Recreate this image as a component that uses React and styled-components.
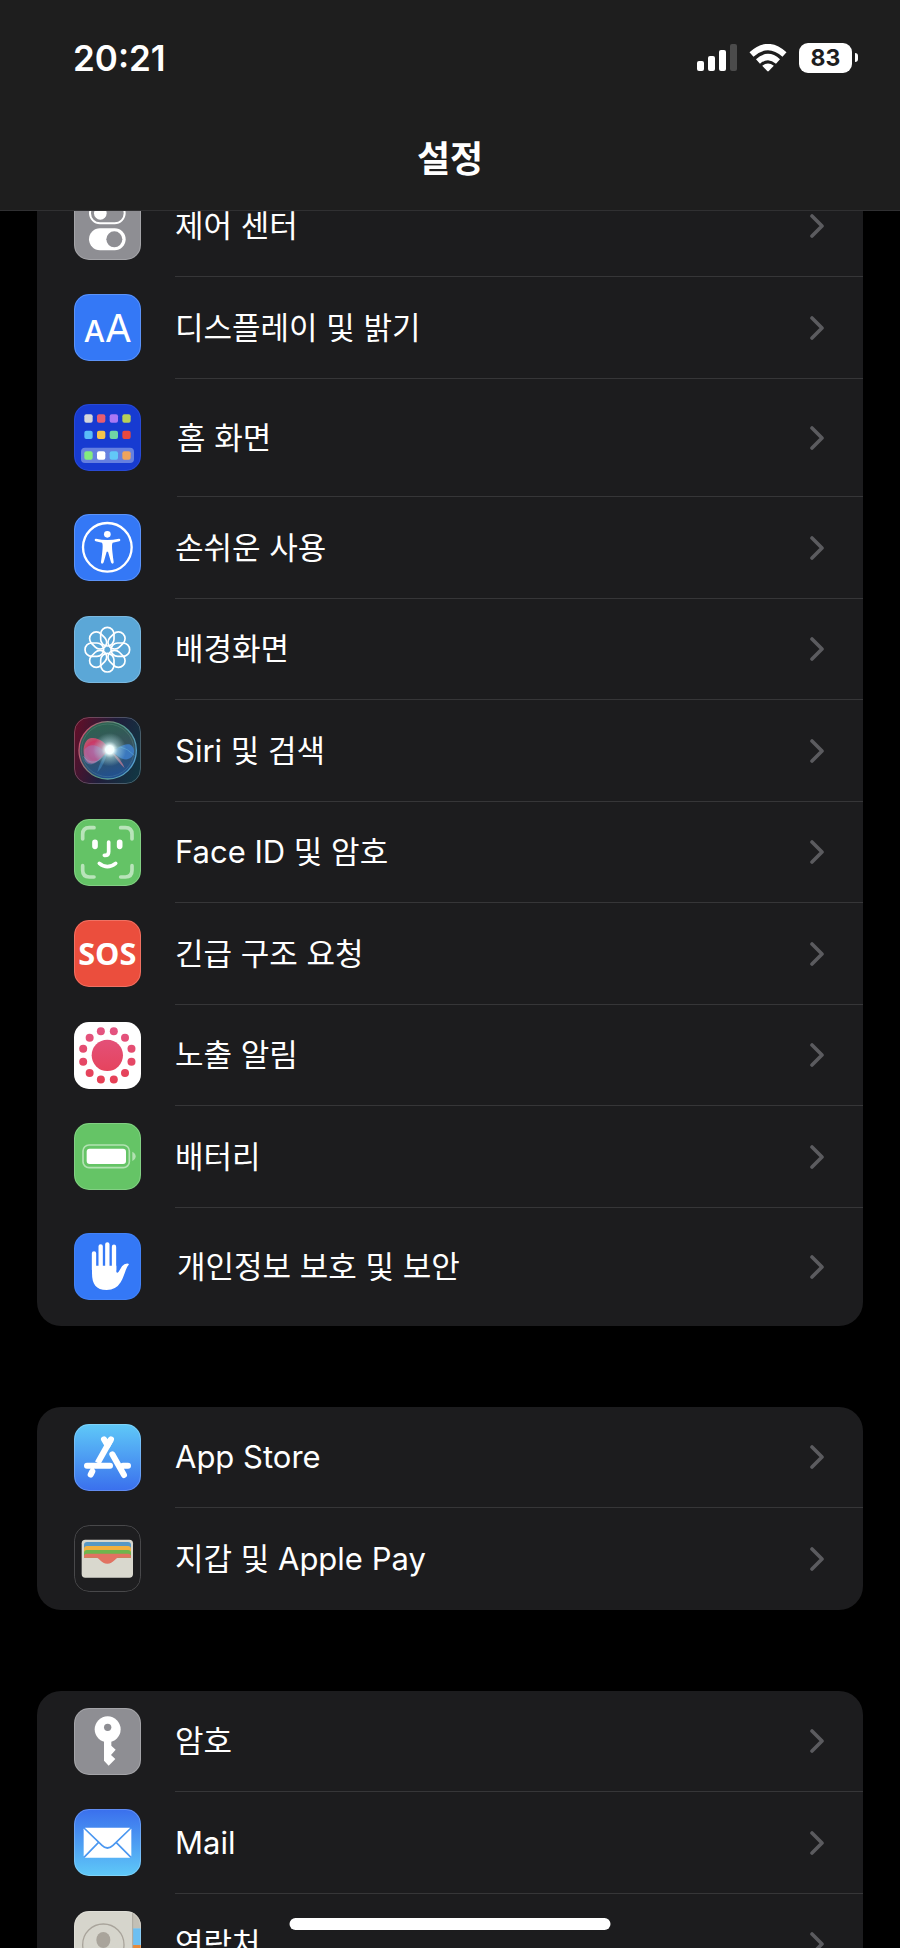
import React from "react";
import styled, { createGlobalStyle } from "styled-components";

const GlobalStyle = createGlobalStyle`
  * {
    box-sizing: border-box;
  }

  body {
    margin: 0;
    background: #000;
    color: #fff;
    font-family: Inter, "Noto Sans CJK KR", sans-serif;
  }
`;

const Screen = styled.div`
  position: relative;
  display: flex;
  flex-direction: column;
  height: 100vh;
  overflow: hidden;
  background: #000;
`;

const Header = styled.header`
  flex: none;
  background: #1e1e1e;
`;

const StatusBar = styled.div`
  display: flex;
  align-items: center;
  justify-content: space-between;
  height: 115px;
  padding: 0 42px 0 73px;
`;

const Time = styled.time`
  font-size: 35px;
  font-weight: 600;
  line-height: 40px;
`;

const StatusIcons = styled.div`
  display: flex;
  align-items: center;
  gap: 12px;
`;

const Battery = styled.div`
  display: flex;
  align-items: center;
  gap: 3px;
`;

const BatteryLevel = styled.span`
  width: 53px;
  border-radius: 9px;
  background: #fff;
  color: #1e1e1e;
  font-size: 23px;
  font-weight: 700;
  line-height: 30px;
  text-align: center;
`;

const BatteryTip = styled.span`
  width: 3px;
  height: 9px;
  border-radius: 0 5px 5px 0;
  background: #fff;
`;

const Title = styled.h1`
  margin: 0;
  padding: 19px 0 26px;
  border-bottom: 1px solid #303032;
  font-size: 36px;
  font-weight: 700;
  line-height: 50px;
  text-align: center;
`;

const Content = styled.main`
  flex: 1;
  min-height: 0;
  overflow: hidden;
`;

const Groups = styled.nav`
  display: flex;
  flex-direction: column;
  gap: 81px;
  margin-top: -35px;
  padding: 0 37px;
`;

const Group = styled.ul`
  margin: 0;
  padding: 0;
  border-radius: 24px;
  background: #1c1c1e;
  list-style: none;
`;

const Item = styled.li`
  height: ${({ $tall }) => ($tall ? "118px" : "101px")};

  &:nth-child(even) {
    height: 102px;
  }
`;

const Row = styled.a`
  display: flex;
  align-items: center;
  gap: ${({ $tall }) => ($tall ? "36px" : "34px")};
  height: 100%;
  padding-left: 37px;
  color: inherit;
  text-decoration: none;
`;

const RowBody = styled.span`
  display: flex;
  flex: 1;
  align-items: center;
  justify-content: space-between;
  height: 100%;
  padding-right: 39px;
  border-bottom: 1px solid #363638;

  ${Item}:last-child & {
    border-bottom-color: transparent;
  }
`;

const Label = styled.span`
  font-size: 31px;
  line-height: 40px;
`;

const IconTile = styled.svg`
  flex: none;
  width: 67px;
  height: 67px;
  margin-bottom: 1px;
  border-radius: 15px;
`;

const HomeIndicator = styled.div`
  position: absolute;
  bottom: 18px;
  left: 50%;
  width: 321px;
  height: 12px;
  border-radius: 6px;
  background: #fff;
  transform: translateX(-50%);
`;

const Tile = ({ fill, edge = "rgba(255, 255, 255, 0.2)", children }) => (
  <IconTile viewBox="0 0 201 201" aria-hidden="true">
    <rect width="201" height="201" fill={fill} />
    {children}
    <rect
      x="1.5"
      y="1.5"
      width="198"
      height="198"
      rx="44"
      fill="none"
      stroke={edge}
      strokeWidth="3"
    />
  </IconTile>
);

const ControlCenterIcon = () => (
  <Tile fill="#8e8e93">
    <rect x="48" y="31" width="104" height="60" rx="30" fill="none" stroke="#fff" strokeWidth="6" />
    <circle cx="79" cy="61" r="19" fill="#fff" />
    <rect x="45" y="106" width="110" height="66" rx="33" fill="#fff" />
    <circle cx="121" cy="139" r="24" fill="#8e8e93" />
  </Tile>
);

const DisplayIcon = () => (
  <Tile fill="#3478f6">
    <g fill="#fff" fontFamily="Inter, sans-serif" textAnchor="middle">
      <text x="61" y="143" fontSize="90" fontWeight="500">
        A
      </text>
      <text x="133" y="143" fontSize="116" fontWeight="400">
        A
      </text>
    </g>
  </Tile>
);

const APP_COLORS = [
  ["#d5d6da", "#e85d70", "#a878f5", "#b6d159"],
  ["#5abcf8", "#f5c34c", "#70d5a5", "#e8493f"],
  ["#83ec7e", "#ffffff", "#62c8f8", "#efa45c"],
];

const HomeScreenIcon = () => (
  <Tile fill="#173bd1" edge="rgba(255, 255, 255, 0.08)">
    <rect x="21" y="131" width="159" height="46" rx="12" fill="#6580e0" />
    {APP_COLORS.map((row, y) =>
      row.map((color, x) => (
        <rect
          key={color}
          x={31 + x * 38}
          y={[31, 80, 142][y]}
          width="25"
          height="25"
          rx="6"
          fill={color}
        />
      ))
    )}
  </Tile>
);

const AccessibilityIcon = () => (
  <Tile fill="#3478f6">
    <circle cx="100" cy="100" r="73" fill="none" stroke="#fff" strokeWidth="7" />
    <circle cx="100" cy="61" r="10" fill="#fff" />
    <path
      d="M66 74 Q83 78 100 78 Q117 78 135 74 Q139 74 139 78 Q139 81 136 82 L116 86 Q114 88 114 96 Q114 110 119 143 Q120 148 116 149 Q112 149 111 145 L102 113 H98 L89 145 Q88 149 84 149 Q80 148 81 143 Q86 110 86 96 Q86 88 84 86 L65 82 Q62 81 62 78 Q62 74 66 74 Z"
      fill="#fff"
    />
  </Tile>
);

const WallpaperIcon = () => (
  <Tile fill="#5ba7d7">
    <g fill="none" stroke="#fff" strokeWidth="5">
      {[0, 45, 90, 135, 180, 225, 270, 315].map((angle) => (
        <rect
          key={angle}
          x="-20"
          y="-67"
          width="40"
          height="56"
          rx="20"
          transform={`translate(100 101) rotate(${angle})`}
        />
      ))}
    </g>
  </Tile>
);

const SiriIcon = () => (
  <Tile fill="url(#siriBack)" edge="rgba(255, 255, 255, 0.22)">
    <defs>
      <linearGradient id="siriBack" x1="0" y1="0.3" x2="1" y2="0.6">
        <stop offset="0" stopColor="#5e1029" />
        <stop offset="0.5" stopColor="#201d3a" />
        <stop offset="1" stopColor="#123543" />
      </linearGradient>
      <linearGradient id="siriOrb" x1="0.35" y1="0" x2="0.6" y2="1">
        <stop offset="0" stopColor="#2c6350" />
        <stop offset="0.45" stopColor="#37545c" />
        <stop offset="1" stopColor="#1f5094" />
      </linearGradient>
      <linearGradient id="siriRim" x1="0" y1="0.3" x2="1" y2="0.7">
        <stop offset="0" stopColor="#c8506e" />
        <stop offset="0.5" stopColor="#5a9a80" />
        <stop offset="1" stopColor="#559fd0" />
      </linearGradient>
      <radialGradient id="siriPink">
        <stop offset="0" stopColor="#c85a8c" />
        <stop offset="0.75" stopColor="#c93a66" />
        <stop offset="1" stopColor="#dc5272" stopOpacity="0.8" />
      </radialGradient>
      <radialGradient id="siriGlow">
        <stop offset="0" stopColor="#fff" />
        <stop offset="0.25" stopColor="#f0ffff" />
        <stop offset="0.5" stopColor="#b4dcdf" stopOpacity="0.55" />
        <stop offset="1" stopColor="#9ed8d8" stopOpacity="0" />
      </radialGradient>
    </defs>
    <circle cx="101" cy="100" r="86" fill="url(#siriOrb)" stroke="url(#siriRim)" strokeWidth="4" />
    <circle cx="101" cy="100" r="79" fill="none" stroke="#9dd5bd" strokeWidth="2" opacity="0.25" />
    <path
      d="M106 96 C94 76 70 58 48 64 C24 72 22 124 44 137 C68 148 86 114 106 100 Z"
      fill="url(#siriPink)"
    />
    <path
      d="M31 98 C47 76 74 84 92 104 C76 142 42 154 31 130 Z"
      fill="#8a90d8"
      opacity="0.4"
    />
    <path
      d="M104 98 C126 104 142 78 166 82 C188 92 183 122 160 127 C138 129 124 108 104 98 Z"
      fill="#3f82d2"
      opacity="0.8"
    />
    <path d="M112 104 Q140 122 152 154 Q131 134 112 104 Z" fill="#b97a92" opacity="0.8" />
    <path d="M100 104 Q92 144 70 166 Q78 130 100 104 Z" fill="#4a93cc" opacity="0.5" />
    <path
      d="M28 118 Q60 160 102 101 Q137 72 181 115"
      fill="none"
      stroke="#78d3e8"
      strokeWidth="2"
      opacity="0.5"
    />
    <circle cx="107" cy="98" r="50" fill="url(#siriGlow)" />
  </Tile>
);

const FaceIdIcon = () => (
  <Tile fill="#65c466">
    <g fill="none" stroke="#fff" strokeLinecap="round">
      <g strokeWidth="11" opacity="0.55">
        <path d="M26 60 V46 Q26 26 46 26 H60" />
        <path d="M140 26 H154 Q174 26 174 46 V60" />
        <path d="M174 140 V154 Q174 174 154 174 H140" />
        <path d="M60 174 H46 Q26 174 26 154 V140" />
      </g>
      <path d="M63 70 V82 M137 70 V82" strokeWidth="17" />
      <path d="M104 69 V98 Q104 109 93 109 H91" strokeWidth="11" />
      <path d="M76 133 Q100 153 125 133" strokeWidth="11" />
    </g>
  </Tile>
);

const SosIcon = () => (
  <Tile fill="#eb4e3d">
    <text
      x="100"
      y="134"
      fill="#fff"
      fontFamily='"Open Sans", sans-serif'
      fontSize="92"
      fontWeight="700"
      textAnchor="middle"
    >
      SOS
    </text>
  </Tile>
);

const ExposureIcon = () => (
  <Tile fill="#fff">
    <defs>
      <linearGradient id="exposure" gradientUnits="userSpaceOnUse" x1="0" y1="15" x2="0" y2="185">
        <stop offset="0" stopColor="#e35583" />
        <stop offset="1" stopColor="#e63f53" />
      </linearGradient>
    </defs>
    <g fill="url(#exposure)">
      <circle cx="100" cy="100" r="47" />
      {Array.from({ length: 12 }, (_, i) => {
        const angle = ((15 + i * 30) * Math.PI) / 180;
        return (
          <circle
            key={i}
            cx={100 + 75 * Math.cos(angle)}
            cy={100 + 75 * Math.sin(angle)}
            r="12"
          />
        );
      })}
    </g>
  </Tile>
);

const BatteryIcon = () => (
  <Tile fill="#65c466">
    <rect x="27" y="66" width="139" height="68" rx="18" fill="none" stroke="#b2e2b2" strokeWidth="5" />
    <rect x="38" y="77" width="118" height="46" rx="9" fill="#fff" />
    <path d="M175 86 Q185 91 185 100 Q185 109 175 114 Z" fill="#b2e2b2" />
  </Tile>
);

const PrivacyIcon = () => (
  <Tile fill="#3478f6" edge="rgba(255, 255, 255, 0.08)">
    <path
      d="M60 61 V110 M80 40 V110 M100 34 V110 M120 41 V110"
      stroke="#fff"
      strokeWidth="13"
      strokeLinecap="round"
    />
    <path
      d="M54 98 H127 V117 Q130 122 134 116 L144 100 Q152 90 163 92 Q166 93 163 97 C154 108 151 130 140 148 Q126 171 98 171 C66 171 54 154 54 120 Z"
      fill="#fff"
    />
  </Tile>
);

const AppStoreIcon = () => (
  <Tile fill="url(#appStore)">
    <defs>
      <linearGradient id="appStore" x1="0" y1="0" x2="0" y2="1">
        <stop offset="0" stopColor="#5fc9f8" />
        <stop offset="1" stopColor="#3a6fed" />
      </linearGradient>
    </defs>
    <g fill="none" stroke="#fff" strokeWidth="18" strokeLinecap="round">
      <path d="M111 46 L71 117" strokeLinecap="butt" />
      <path d="M111 46 L100 65 M90 46 L97 58 M39 125 H108 M147 125 H162 M55 142 L50 152 M115 91 L150 153" />
    </g>
  </Tile>
);

const WalletIcon = () => (
  <Tile fill="#1e1e20" edge="#48484a">
    <rect x="23" y="44" width="154" height="114" rx="11" fill="#d9d8ce" />
    <path d="M30 60 Q30 51 39 51 H162 Q171 51 171 60 V98 H30 Z" fill="#5798c5" />
    <path d="M30 72 Q30 63 39 63 H162 Q171 63 171 72 V98 H30 Z" fill="#f2b13f" />
    <path d="M30 84 Q30 75 39 75 H162 Q171 75 171 84 V98 H30 Z" fill="#6fb54d" />
    <path
      d="M30 95 Q30 86 39 86 H162 Q171 86 171 95 V98 H133 C123 98 119 116 100 116 C81 116 77 98 67 98 H30 Z"
      fill="#e17262"
    />
  </Tile>
);

const KeyIcon = () => (
  <Tile fill="#8e8e93">
    <circle cx="101" cy="64" r="39" fill="#fff" />
    <circle cx="101" cy="58" r="11" fill="#8e8e93" />
    <path d="M90 96 V158 L104 173 L124 153 L111 141 L125 125 L112 113 V96 Z" fill="#fff" />
  </Tile>
);

const MailIcon = () => (
  <Tile fill="url(#mail)">
    <defs>
      <linearGradient id="mail" x1="0" y1="0" x2="0" y2="1">
        <stop offset="0" stopColor="#3a6fed" />
        <stop offset="1" stopColor="#5fc9f8" />
      </linearGradient>
    </defs>
    <rect x="29" y="56" width="143" height="90" rx="5" fill="#fff" />
    <path
      d="M30 57 L84 109 Q100 125 117 109 L171 57 M30 145 L73 101 M171 145 L127 101"
      fill="none"
      stroke="#4b97f0"
      strokeWidth="5"
    />
  </Tile>
);

const ContactsIcon = () => (
  <Tile fill="#d6d5cc">
    <rect x="177" width="24" height="52" fill="#c3c0b6" />
    <rect x="177" y="52" width="24" height="50" fill="#6cbff2" />
    <rect x="177" y="102" width="24" height="50" fill="#e58a3c" />
    <rect x="177" y="152" width="24" height="49" fill="#c3c0b6" />
    <path d="M176 0 V201" stroke="#aaa79d" strokeWidth="3" />
    <circle cx="88" cy="101" r="62" fill="none" stroke="#a9a49b" strokeWidth="4" />
    <ellipse cx="88" cy="87" rx="21" ry="24" fill="#a9a49b" />
    <path d="M42 139 Q60 117 88 117 Q116 117 134 139 Q88 186 42 139 Z" fill="#a9a49b" />
  </Tile>
);

const Chevron = () => (
  <svg width="14" height="24" viewBox="0 0 14 24" fill="none" aria-hidden="true">
    <path
      d="M2 2 L12 12 L2 22"
      stroke="#5b5b5f"
      strokeWidth="3.6"
      strokeLinecap="round"
      strokeLinejoin="round"
    />
  </svg>
);

const SignalIcon = () => (
  <svg width="40" height="27" viewBox="0 0 40 27" aria-label="신호 강도">
    <rect y="17" width="7" height="10" rx="2" fill="#fff" />
    <rect x="11" y="12" width="7" height="15" rx="2" fill="#fff" />
    <rect x="22" y="6" width="7" height="21" rx="2" fill="#fff" />
    <rect x="33" width="7" height="27" rx="2" fill="#4b4b4b" />
  </svg>
);

const WifiIcon = () => (
  <svg width="38" height="28" viewBox="0 0 38 28" fill="none" aria-label="Wi-Fi">
    <path d="M2.5 10.5 Q19 -4.5 35.5 10.5" stroke="#fff" strokeWidth="6" />
    <path d="M9 17.5 Q19 8.5 29 17.5" stroke="#fff" strokeWidth="6" />
    <path d="M13.2 21.8 Q19 17.4 24.8 21.8 L19.8 27 Q19 27.8 18.2 27 Z" fill="#fff" />
  </svg>
);

const groups = [
  [
    { label: "제어 센터", icon: ControlCenterIcon },
    { label: "디스플레이 및 밝기", icon: DisplayIcon },
    { label: "홈 화면", icon: HomeScreenIcon, tall: true },
    { label: "손쉬운 사용", icon: AccessibilityIcon },
    { label: "배경화면", icon: WallpaperIcon },
    { label: "Siri 및 검색", icon: SiriIcon },
    { label: "Face ID 및 암호", icon: FaceIdIcon },
    { label: "긴급 구조 요청", icon: SosIcon },
    { label: "노출 알림", icon: ExposureIcon },
    { label: "배터리", icon: BatteryIcon },
    { label: "개인정보 보호 및 보안", icon: PrivacyIcon, tall: true },
  ],
  [
    { label: "App Store", icon: AppStoreIcon },
    { label: "지갑 및 Apple Pay", icon: WalletIcon },
  ],
  [
    { label: "암호", icon: KeyIcon },
    { label: "Mail", icon: MailIcon },
    { label: "연락처", icon: ContactsIcon },
  ],
];

const App = () => {
  return (
    <>
      <GlobalStyle />
      <Screen lang="ko">
        <Header>
          <StatusBar>
            <Time>20:21</Time>
            <StatusIcons>
              <SignalIcon />
              <WifiIcon />
              <Battery>
                <BatteryLevel>83</BatteryLevel>
                <BatteryTip />
              </Battery>
            </StatusIcons>
          </StatusBar>
          <Title>설정</Title>
        </Header>
        <Content>
          <Groups>
            {groups.map((items, i) => (
              <Group key={i}>
                {items.map(({ label, icon: Icon, tall }) => (
                  <Item key={label} $tall={tall}>
                    <Row href="#" $tall={tall}>
                      <Icon />
                      <RowBody>
                        <Label>{label}</Label>
                        <Chevron />
                      </RowBody>
                    </Row>
                  </Item>
                ))}
              </Group>
            ))}
          </Groups>
        </Content>
        <HomeIndicator />
      </Screen>
    </>
  );
};

export default App;
